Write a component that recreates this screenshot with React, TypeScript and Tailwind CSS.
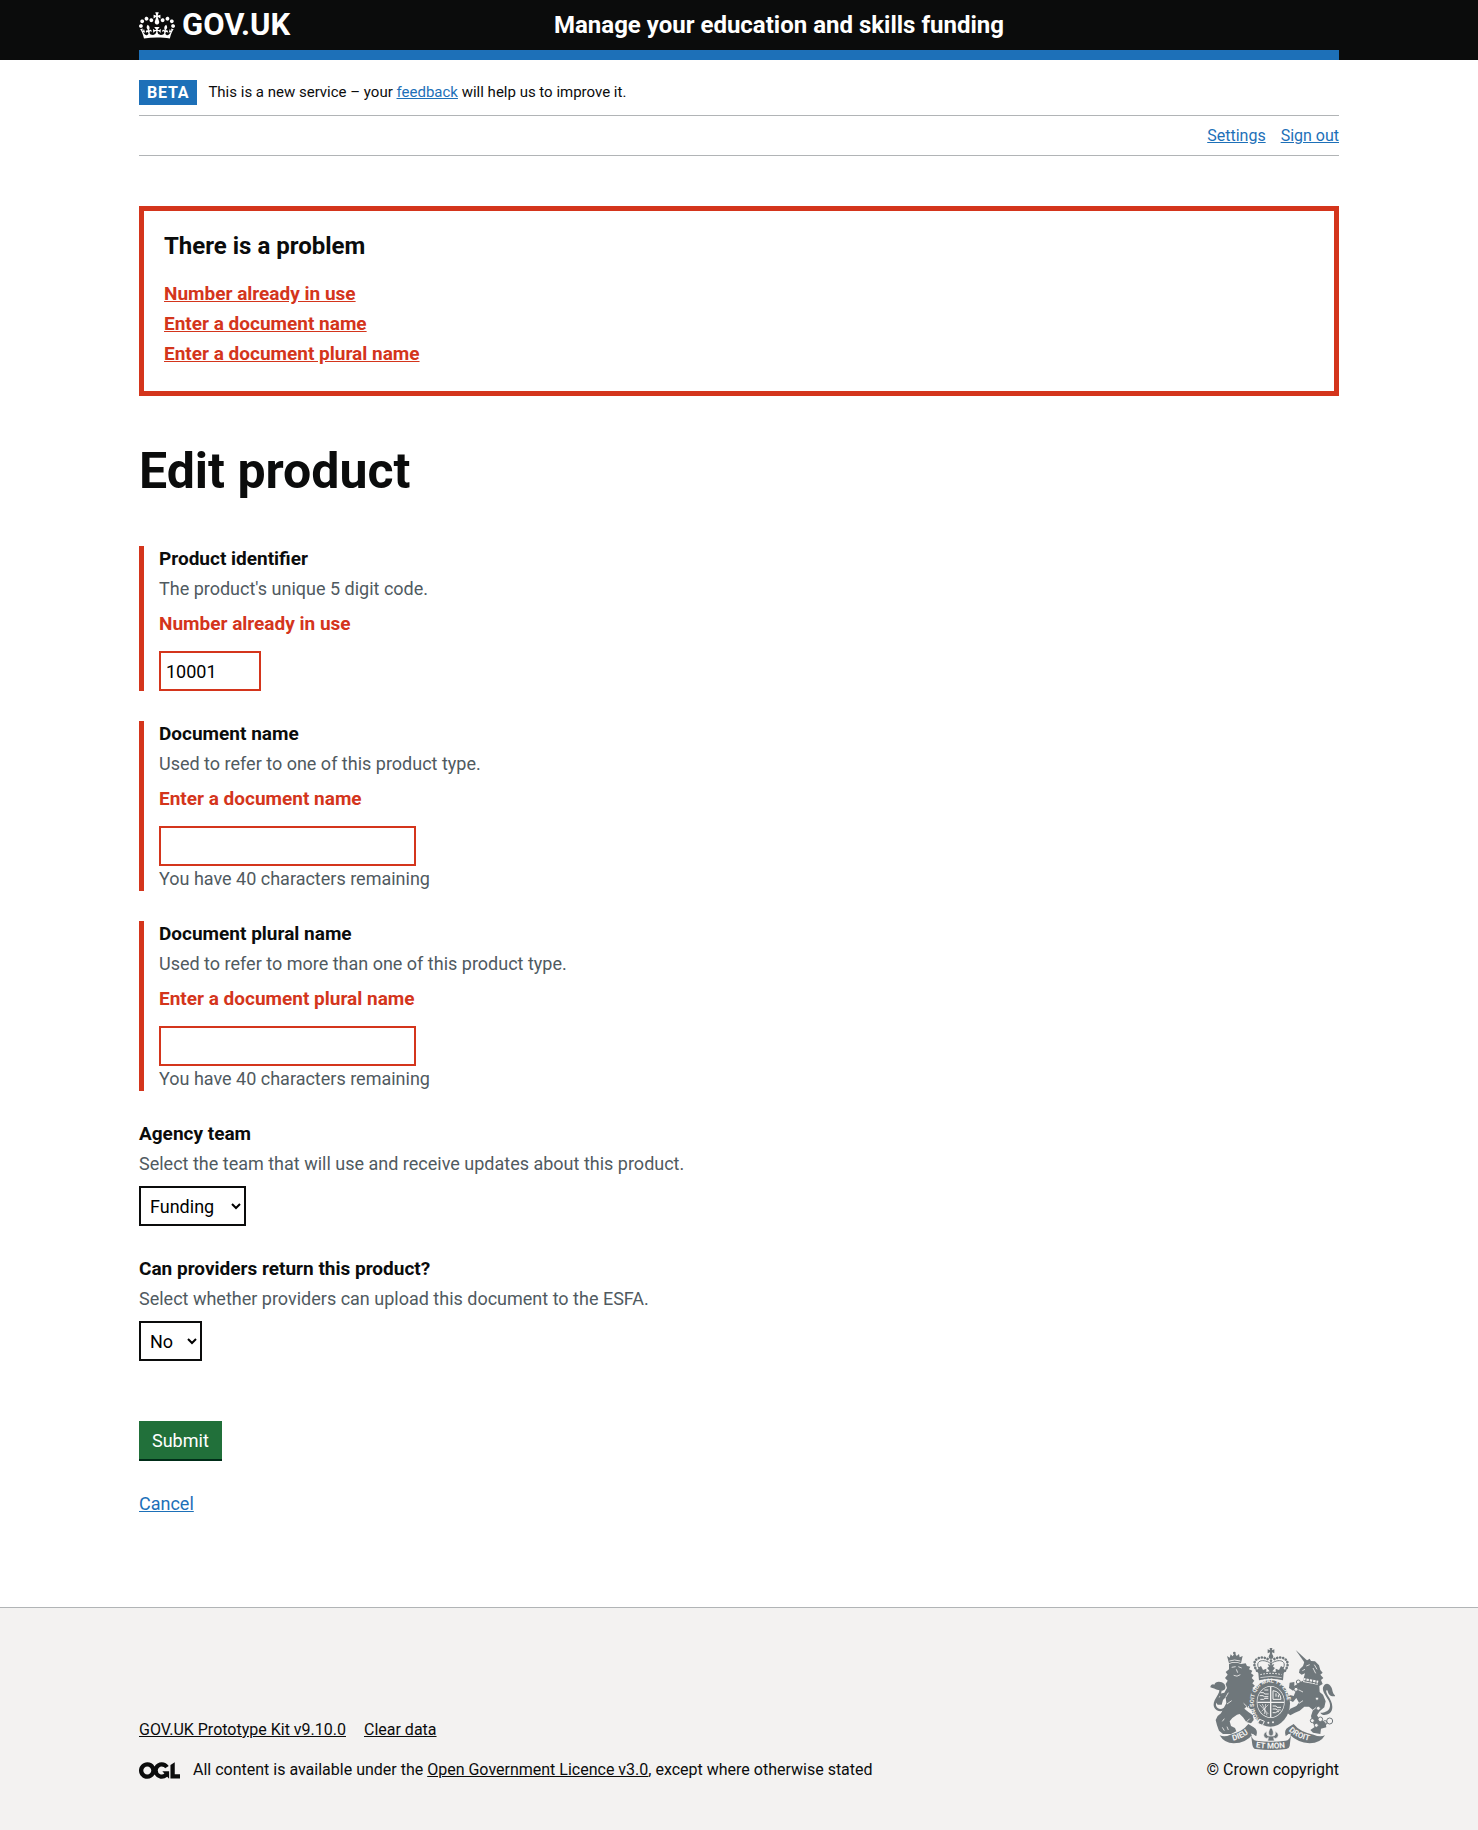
import type { ReactNode } from "react";

function CrownLogo() {
  return (
    <svg viewBox="0 0 132 97" className="h-[27px] w-9 shrink-0" fill="currentColor" aria-hidden="true">
      <path
        fillRule="evenodd"
        d="M25 30.2c3.5 1.5 7.7-.2 9.1-3.7 1.5-3.6-.2-7.8-3.9-9.2-3.6-1.4-7.6.3-9.1 3.9-1.4 3.5.3 7.5 3.9 9zM9 39.5c3.6 1.5 7.8-.2 9.2-3.7 1.5-3.6-.2-7.8-3.9-9.1-3.6-1.5-7.6.2-9.1 3.8-1.4 3.5.3 7.5 3.8 9zM4.4 57.2c3.5 1.5 7.7-.2 9.1-3.8 1.5-3.6-.2-7.7-3.9-9.1-3.5-1.5-7.6.3-9.1 3.8-1.4 3.5.3 7.6 3.9 9.1zm38.3-21.4c3.5 1.5 7.7-.2 9.1-3.8 1.5-3.6-.2-7.7-3.9-9.1-3.6-1.5-7.6.3-9.1 3.8-1.3 3.6.4 7.7 3.9 9.1zm64.4-5.6c-3.6 1.5-7.8-.2-9.1-3.7-1.5-3.6.2-7.8 3.8-9.2 3.6-1.4 7.7.3 9.2 3.9 1.3 3.5-.4 7.5-3.9 9zm15.9 9.3c-3.6 1.5-7.7-.2-9.1-3.7-1.5-3.6.2-7.8 3.7-9.1 3.6-1.5 7.7.2 9.2 3.8 1.5 3.5-.3 7.5-3.8 9zm4.7 17.7c-3.6 1.5-7.8-.2-9.2-3.8-1.5-3.6.2-7.7 3.9-9.1 3.6-1.5 7.7.3 9.2 3.8 1.3 3.5-.4 7.6-3.9 9.1zM89.3 35.8c-3.6 1.5-7.8-.2-9.2-3.8-1.4-3.6.2-7.7 3.9-9.1 3.6-1.5 7.7.3 9.2 3.8 1.4 3.6-.3 7.7-3.9 9.1zM69.7 17.7l8.9 4.7V9.3l-8.9 2.8c-.2-.3-.5-.6-.9-.9L72.4 0H59.6l3.5 11.2c-.3.3-.6.5-.9.9l-8.8-2.8v13.1l8.8-4.7c.3.3.6.7.9.9l-5 15.4v.1c-.2.8-.4 1.6-.4 2.4 0 4.1 3.1 7.5 7 8.1h.2c.3 0 .7.1 1 .1.4 0 .7 0 1-.1h.2c4-.6 7.1-4.1 7.1-8.1 0-.8-.1-1.7-.4-2.4V34l-5.1-15.4c.4-.2.7-.6 1-.9zM66 92.8c16.9 0 32.8 1.1 47.1 3.2 4-16.9 8.9-26.7 14-33.5l-9.6-3.4c1 4.9 1.1 7.2 0 10.2-1.5-1.4-3-4.3-4.2-8.7L108.6 76c2.8-2 5-3.2 7.5-3.3-4.4 9.4-10 11.9-13.6 11.2-4.3-.8-6.3-4.6-5.6-7.9 1-4.7 5.7-5.9 8-.5 4.3-8.7-3-11.4-7.6-8.8 7.1-7.2 7.9-13.5 2.1-21.1-8 6.1-8.1 12.3-4.5 20.8-4.7-5.4-12.1-2.5-9.5 6.2 3.4-5.2 7.9-2 7.2 3.1-.6 4.3-6.4 7.8-13.5 7.2-10.3-.9-10.9-8-11.2-13.8 2.5-.5 7.1 1.8 11 7.3L80.2 60c-4.1 4.4-8 5.3-12.3 5.4 1.4-4.4 8-11.6 8-11.6H55.5s6.4 7.2 7.9 11.6c-4.2-.1-8-1-12.3-5.4l1.4 16.4c3.9-5.5 8.5-7.7 10.9-7.3-.3 5.8-.9 12.8-11.1 13.8-7.2.6-12.9-2.9-13.5-7.2-.7-5 3.8-8.3 7.1-3.1 2.7-8.7-4.6-11.6-9.4-6.2 3.7-8.5 3.6-14.7-4.6-20.8-5.8 7.6-5 13.9 2.2 21.1-4.7-2.6-11.9.1-7.7 8.8 2.3-5.5 7.1-4.2 8.1.5.7 3.3-1.3 7.1-5.7 7.9-3.5.7-9-1.8-13.5-11.2 2.5.1 4.7 1.3 7.5 3.3l-4.7-15.4c-1.2 4.4-2.7 7.2-4.3 8.7-1.1-3-.9-5.3 0-10.2l-9.5 3.4c5 6.9 9.9 16.7 14 33.5 14.8-2.1 30.8-3.2 47.7-3.2z"
      />
    </svg>
  );
}

function OglLogo() {
  return (
    <svg viewBox="0 0 483.2 195.7" className="h-[17px] w-[41px] shrink-0" fill="currentColor" aria-hidden="true">
      <path d="M421.5 142.8V.1l-50.7 32.3v161.1h112.4v-50.7zm-122.3-9.6A47.12 47.12 0 0 1 221 97.8c0-26 21.1-47.1 47.1-47.1 16.7 0 31.4 8.7 39.7 21.8l42.7-27.2A97.63 97.63 0 0 0 268.1 0c-36.5 0-68.3 20.1-85.1 49.7A98 98 0 0 0 97.8 0C43.9 0 0 43.9 0 97.8s43.9 97.8 97.8 97.8c36.5 0 68.3-20.1 85.1-49.7a97.76 97.76 0 0 0 149.6 25.4l19.4 22.2h3v-87.8h-80l24.3 27.5zM97.8 145c-26 0-47.1-21.1-47.1-47.1s21.1-47.1 47.1-47.1 47.1 21.1 47.1 47.1S123.8 145 97.8 145" />
    </svg>
  );
}

function RoyalArms() {
  const ink = "#6f777b";
  const paper = "#f3f2f1";
  return (
    <svg viewBox="33 24 375 306" className="h-[102px] w-[125px]" aria-hidden="true">
      <defs>
        <path id="garter" d="M184 240C158 214 158 160 184 138C202 124 228 124 244 138C270 160 270 214 246 240" />
        <path id="ribbonLeft" d="M102 302Q132 296 158 272" />
        <path id="ribbonMiddle" d="M170 322Q216 329 262 322" />
        <path id="ribbonRight" d="M269 272Q294 296 334 303" />
      </defs>

      {/* lion */}
      <g fill={ink}>
        <path d="M90 70L84 48L92 53L95 43L101 49L107 38L113 48L120 42L122 52L131 48L126 70Q106 62 90 70Z" />
        <circle cx="106" cy="39" r="4" />
        <path d="M90 72Q108 64 126 72L140 70L144 78L154 80L150 88L160 92L156 100L164 106L158 114L166 122L160 130L168 138L160 144L172 156L178 172L174 188L172 206L156 208L142 200L136 206L148 216L162 226L164 240L156 250L142 246L132 232L122 222L114 224L100 234L92 244L96 258L108 264L112 274L96 282L72 282L60 272L54 256L50 240L56 228L66 220L74 204L82 190L80 172L72 180L68 194L56 194L48 184L54 176L64 170L58 162L76 158L84 144L80 132L86 122L78 114L86 104L80 96L90 88Z" />
        <path d="M70 152C58 152 52 148 34 142C34 134 42 130 46 134C48 124 66 122 76 132C82 142 80 150 70 152Z" />
      </g>
      <path d="M76 206C62 216 44 206 48 188C52 172 70 160 64 142" fill="none" stroke={ink} strokeWidth="7" />
      <g stroke={paper} fill="none" strokeWidth="2.5">
        <path d="M91 63Q106 57 124 63" />
        <path d="M98 82L110 80M118 80L128 84M112 88L116 98M104 106Q114 112 124 104" />
        <path d="M80 172L88 158M84 192L98 182M144 200L134 190M142 246L152 236" />
        <path d="M70 244L76 236M76 272L70 262M88 270L84 260M150 208L148 198M160 206L158 196" />
      </g>

      {/* unicorn */}
      <g fill={ink}>
        <path d="M290 30L318 70L327 64Z" />
        <path d="M316 66L332 56L336 63L348 64L360 76L364 90L371 98L364 104L373 114L366 120L371 132L361 138L362 156L372 164L380 184L376 202L362 214L354 226L362 238L380 248L382 262L366 266L364 282L342 278L334 270L348 260L340 246L336 228L342 210L330 200L316 200L302 212L288 218L274 226L264 218L274 206L292 198L300 188L292 174L282 186L270 180L270 164L284 168L290 154L300 150L292 144L282 152L270 144L272 128L286 126L286 138L304 126L312 122L318 100L308 104L300 98L302 88L312 78Z" />
        <path d="M364 218C390 218 400 200 388 180C380 166 366 150 374 138C380 128 390 130 396 140C402 148 398 158 410 168C396 172 388 164 386 152C380 148 380 154 386 166C400 186 406 206 392 220C380 228 368 226 364 218Z" />
      </g>
      <path d="M314 114L358 122L356 134L312 126Z" fill={paper} />
      <path d="M314 122L356 130M322 112L320 124M332 113L330 127M342 115L340 130M352 118L350 132" stroke={ink} strokeWidth="3" />
      <g stroke={paper} fill="none" strokeWidth="2.5">
        <path d="M322 78L332 74M310 92L318 88M346 74L354 88M342 84L350 100M300 150L312 156M300 190L312 182" />
        <path d="M342 210L352 202" />
      </g>
      <g fill="none" stroke={ink} strokeWidth="3">
        <circle cx="298" cy="126" r="6" />
        <circle cx="291" cy="148" r="6" fill={paper} />
        <circle cx="354" cy="176" r="5" fill={paper} />
        <circle cx="358" cy="205" r="6" fill={paper} />
        <circle cx="340" cy="242" r="6" fill={paper} />
        <circle cx="352" cy="256" r="6" fill={paper} />
        <circle cx="364" cy="238" r="7" fill={paper} />
        <circle cx="378" cy="248" r="6" />
        <circle cx="392" cy="243" r="9" />
      </g>

      {/* crown */}
      <g fill={ink}>
        <path d="M212 24H220L219 31L226 28V40L219 37L220 46H212L213 37L206 40V28L213 31Z" />
        <circle cx="216" cy="50" r="7" />
        <path d="M178 100L168 86L176 90L180 82L186 78L192 90L202 86L202 96L212 94L204 84L210 80L206 72L216 76L226 72L222 80L228 84L220 94L230 96L230 86L240 90L246 78L252 82L256 90L264 86L254 100L252 121Q216 111 180 121Z" />
      </g>
      <g fill="none" stroke={ink} strokeWidth="8" strokeDasharray="0.1 9" strokeLinecap="round">
        <path d="M174 92C152 64 180 40 211 60" />
        <path d="M258 92C280 64 252 40 221 60" />
        <path d="M216 62V80" />
      </g>
      <g fill="none" stroke={ink} strokeWidth="3">
        <path d="M180 86C168 66 186 54 212 68M252 86C264 66 246 54 220 68" />
      </g>
      <path d="M184 104Q216 96 248 104" fill="none" stroke={paper} strokeWidth="3" strokeDasharray="5 4" />
      <path d="M184 113Q216 105 248 113" fill="none" stroke={paper} strokeWidth="2" />

      {/* garter and shield */}
      <ellipse cx="214" cy="190" rx="59" ry="70" fill={ink} />
      <ellipse cx="215" cy="186" rx="42" ry="48" fill={paper} />
      <ellipse cx="215" cy="186" rx="40" ry="46" fill={ink} />
      <path d="M215 140V232M175 187H255" stroke={paper} strokeWidth="4" />
      <g stroke={paper} strokeWidth="3" fill="none">
        <path d="M184 158h10l3 4h12M182 167h10l4 3h12M184 178h10l4-3h10M196 150h12" />
        <path d="M221 198h10l3 4h12M221 207h10l4 3h10M221 218h9l4-3h6" />
        <path d="M222 152Q244 154 246 178H222ZM231 160v10M238 164v8" />
        <path d="M182 194L208 222M190 192L204 226M200 192L196 222M208 194L188 214" strokeWidth="2" />
      </g>
      <path d="M182 238L176 250L190 256L196 244Z" fill={ink} stroke={paper} strokeWidth="3" />
      <circle cx="208" cy="248" r="3" fill={paper} />
      <circle cx="222" cy="247" r="3" fill={paper} />
      <g fill={paper} fontFamily="Roboto, sans-serif" fontWeight="700" fontSize="17">
        <text>
          <textPath href="#garter">HONI SOIT QUI MAL Y PENSE</textPath>
        </text>
      </g>

      {/* motto ribbon */}
      <path d="M62 286Q78 292 94 284Q130 276 148 252L164 262Q178 270 172 288L160 284Q142 308 104 310Q76 310 62 286Z" fill={ink} />
      <path d="M378 286Q362 292 344 284Q302 276 284 252L268 262Q254 270 260 288L270 282Q296 308 332 310Q364 310 378 286Z" fill={ink} />
      <path d="M156 284Q160 300 172 302Q216 308 260 302Q272 300 276 284L272 318Q270 326 262 327Q216 333 170 327Q162 326 160 314Z" fill={ink} />
      <path d="M156 282Q166 280 170 296M276 282Q266 280 262 296" stroke={paper} strokeWidth="3" fill="none" />
      <g fill={ink} stroke={paper} strokeWidth="2">
        <path d="M216 262Q228 276 220 288H212Q204 276 216 262Z" />
        <path d="M211 288Q200 288 204 274Q190 280 196 292Q202 298 208 293L206 303H226L224 293Q230 298 236 292Q242 280 228 274Q232 288 221 288Z" />
      </g>
      <g fill={paper} fontFamily="Roboto, sans-serif" fontWeight="700" fontSize="24">
        <text>
          <textPath href="#ribbonLeft">DIEU</textPath>
        </text>
        <text>
          <textPath href="#ribbonMiddle">ET MON</textPath>
        </text>
        <text>
          <textPath href="#ribbonRight">DROIT</textPath>
        </text>
      </g>
    </svg>
  );
}

const container = "mx-auto w-full max-w-[1200px]";
const linkBlue = "text-[#1d70b8] underline";

type FormGroupProps = {
  id: string;
  label: string;
  hint: string;
  error?: string;
  children: ReactNode;
};

function FormGroup({ id, label, hint, error, children }: FormGroupProps) {
  return (
    <div className={error ? "flex flex-col items-start border-l-5 border-[#d4351c] pl-[15px]" : "flex flex-col items-start"}>
      <label htmlFor={id} className="mb-[5px] font-bold">
        {label}
      </label>
      <p id={`${id}-hint`} className="mb-2.5 text-lg/[25px] text-[#505a5f]">
        {hint}
      </p>
      {error && (
        <p id={`${id}-error`} className="mb-[15px] font-bold text-[#d4351c]">
          {error}
        </p>
      )}
      {children}
    </div>
  );
}

const errorInput = "h-10 border-2 border-[#d4351c] bg-white p-[5px] text-lg/[25px] text-black";
const select = "h-10 border-2 border-[#0b0c0c] bg-white p-[5px] text-lg/[25px] text-black";

export default function App() {
  return (
    <div className="flex min-h-screen flex-col bg-white font-['Roboto',sans-serif] text-[19px]/[25px] text-[#0b0c0c] antialiased">
      <header className="bg-[#0b0c0c] text-white">
        <div className={container}>
          <div className="flex h-[50px] items-center">
            <div className="flex w-1/3">
              <a href="#home" className="flex items-center gap-[7px] text-[31px]/[30px] font-bold">
                <CrownLogo />
                GOV.UK
              </a>
            </div>
            <a href="#service" className="w-2/3 pl-[15px] text-2xl/[30px] font-bold">
              Manage your education and skills funding
            </a>
          </div>
          <div className="h-2.5 bg-[#1d70b8]" />
        </div>
      </header>

      <div className={container}>
        <div className="mt-2.5 flex items-center border-b border-[#b1b4b6] py-2.5 text-[15px]/[25px]">
          <strong className="mr-[11px] bg-[#1d70b8] px-2 text-base/[25px] font-bold tracking-wider text-white">BETA</strong>
          <span>
            This is a new service – your{" "}
            <a href="#feedback" className={linkBlue}>
              feedback
            </a>{" "}
            will help us to improve it.
          </span>
        </div>
        <nav className="flex justify-end gap-[15px] border-b border-[#b1b4b6] pt-2.5 pb-[9px] text-base/5">
          <a href="#settings" className={linkBlue}>
            Settings
          </a>
          <a href="#sign-out" className={linkBlue}>
            Sign out
          </a>
        </nav>
      </div>

      <main className={`${container} grow pt-[50px] pb-[90px]`}>
        <section aria-labelledby="error-title" className="border-5 border-[#d4351c] p-5">
          <h2 id="error-title" className="mb-5 text-2xl/[30px] font-bold">
            There is a problem
          </h2>
          <ul className="mb-[5px] flex flex-col gap-[5px] font-bold text-[#d4351c]">
            <li>
              <a href="#identifier" className="underline">Number already in use</a>
            </li>
            <li>
              <a href="#name" className="underline">Enter a document name</a>
            </li>
            <li>
              <a href="#plural" className="underline">Enter a document plural name</a>
            </li>
          </ul>
        </section>

        <h1 className="my-[50px] text-[50px]/[50px] font-bold">Edit product</h1>

        <form className="flex flex-col gap-[30px]" onSubmit={(e) => e.preventDefault()}>
          <FormGroup id="identifier" label="Product identifier" hint="The product's unique 5 digit code." error="Number already in use">
            <input id="identifier" type="text" defaultValue="10001" className={`${errorInput} w-[102px]`} />
          </FormGroup>
          <FormGroup id="name" label="Document name" hint="Used to refer to one of this product type." error="Enter a document name">
            <input id="name" type="text" className={`${errorInput} w-[257px]`} />
            <p className="text-lg/[25px] text-[#505a5f]">You have 40 characters remaining</p>
          </FormGroup>
          <FormGroup
            id="plural"
            label="Document plural name"
            hint="Used to refer to more than one of this product type."
            error="Enter a document plural name"
          >
            <input id="plural" type="text" className={`${errorInput} w-[257px]`} />
            <p className="text-lg/[25px] text-[#505a5f]">You have 40 characters remaining</p>
          </FormGroup>
          <FormGroup id="team" label="Agency team" hint="Select the team that will use and receive updates about this product.">
            <select id="team" defaultValue="Funding" className={`${select} w-[107px]`}>
              <option>Funding</option>
            </select>
          </FormGroup>
          <FormGroup
            id="returnable"
            label="Can providers return this product?"
            hint="Select whether providers can upload this document to the ESFA."
          >
            <select id="returnable" defaultValue="No" className={`${select} w-[63px]`}>
              <option>No</option>
              <option>Yes</option>
            </select>
          </FormGroup>
          <div className="flex flex-col items-start gap-[30px] pt-[30px]">
            <button type="submit" className="h-10 border-b-2 border-[#002d18] bg-[#21703a] px-[13px] text-lg/[25px] text-white">
              Submit
            </button>
            <a href="#cancel" className={`${linkBlue} text-lg/[25px]`}>
              Cancel
            </a>
          </div>
        </form>
      </main>

      <footer className="border-t border-[#b1b4b6] bg-[#f3f2f1] pt-10 pb-[50px] text-base/5">
        <div className={`${container} flex items-end justify-between`}>
          <div className="flex flex-col gap-5">
            <div className="flex gap-[18px]">
              <a href="#kit" className="underline">
                GOV.UK Prototype Kit v9.10.0
              </a>
              <a href="#clear" className="underline">
                Clear data
              </a>
            </div>
            <div className="flex items-center gap-[13px]">
              <OglLogo />
              <span>
                All content is available under the{" "}
                <a href="#licence" className="underline">
                  Open Government Licence v3.0
                </a>
                , except where otherwise stated
              </span>
            </div>
          </div>
          <a href="#copyright" className="flex flex-col items-center gap-2.5">
            <RoyalArms />
            © Crown copyright
          </a>
        </div>
      </footer>
    </div>
  );
}
